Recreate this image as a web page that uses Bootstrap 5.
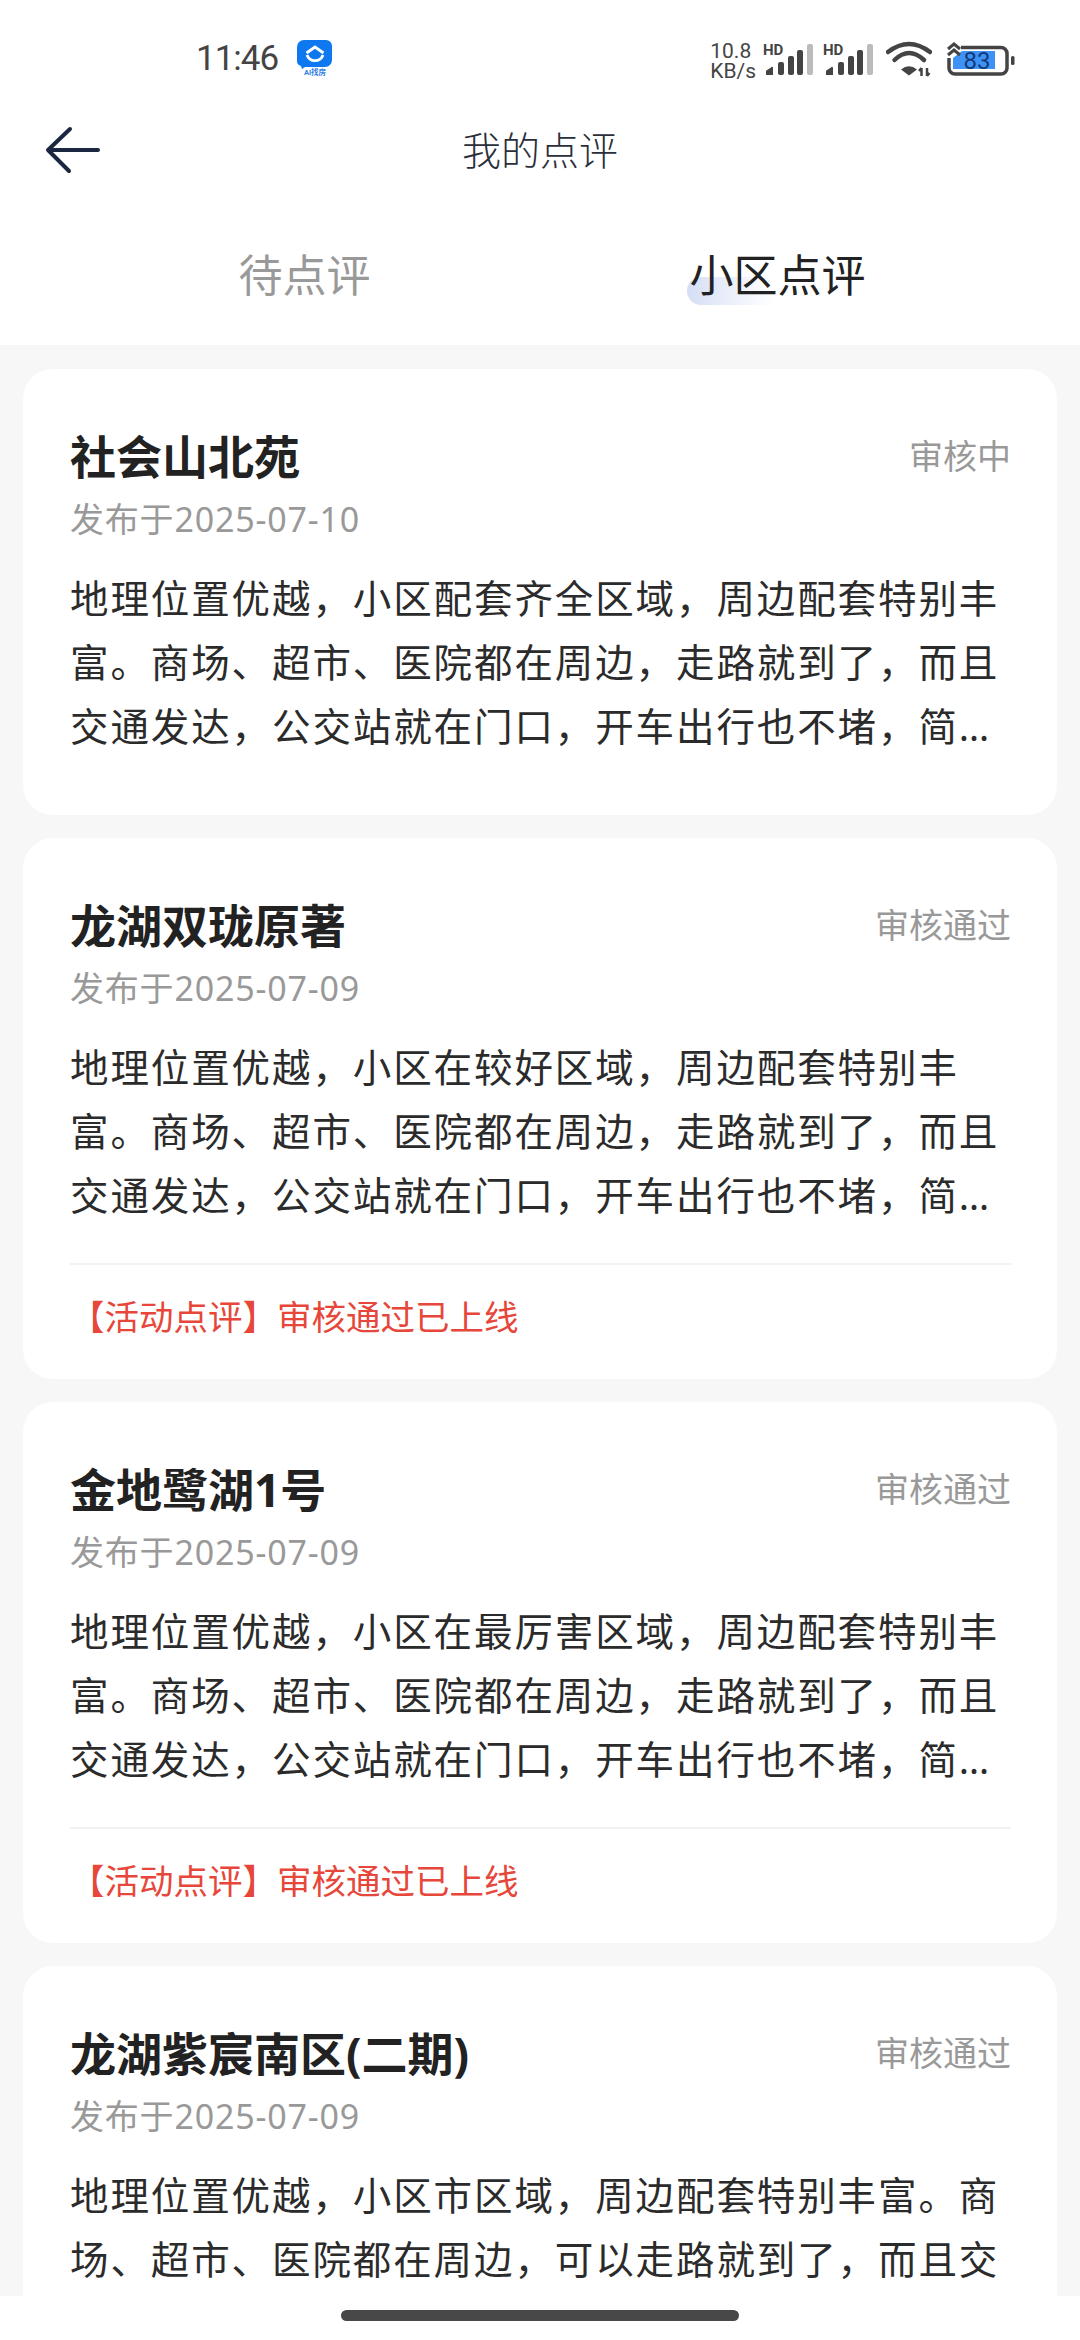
<!DOCTYPE html>
<html lang="zh-CN">

<head>
    <meta charset="UTF-8">
    <meta name="viewport" content="width=device-width, initial-scale=1.0">
    <title>我的点评</title>
    <link rel="stylesheet" href="https://cdn.jsdelivr.net/npm/bootstrap@5.3.0/dist/css/bootstrap.min.css">
    <style>
        body {
            background-color: #f7f7f7;
            color: #222;
            font-family: "Noto Sans", "Noto Sans CJK SC", sans-serif;
        }

        .phone {
            height: 2340px;
            overflow: hidden;
        }

        .status-bar {
            height: 98px;
            padding: 20px 63px 0 196px;
            color: #444;
        }

        .clock {
            font-family: Roboto, sans-serif;
            font-size: 35px;
            letter-spacing: -1px;
            margin-right: 19px;
        }

        .app-mark {
            margin-top: -2px;
        }

        .speed {
            font-family: Roboto, sans-serif;
            font-size: 21px;
            line-height: 20px;
            margin-right: 7px;
            margin-top: 3px;
        }

        .gap-signal {
            margin-right: 10px;
        }

        .gap-wide {
            margin-right: 13px;
        }

        .top-nav {
            height: 104px;
        }

        .top-title {
            font-size: 39px;
            font-weight: 300;
            color: #2a2f3a;
        }

        .back-btn {
            left: 45px;
            top: 28px;
        }

        .tabs-row {
            height: 143px;
            padding: 3px 66px 0 68px;
        }

        .tab-item {
            font-size: 44px;
            line-height: 60px;
            color: #999;
        }

        .tab-item.on {
            color: #222;
            isolation: isolate;
        }

        .tab-item.on::before {
            content: "";
            position: absolute;
            left: -3px;
            bottom: 0;
            width: 86px;
            height: 28px;
            border-radius: 14px 0 0 14px;
            background: linear-gradient(90deg, #d5dff5, #fff);
            z-index: -1;
        }

        .list-wrap {
            padding: 24px 23px 0;
            gap: 23px;
            min-height: 0;
        }

        .review-card {
            border: 0;
            border-radius: 30px;
            flex-shrink: 0;
        }

        .review-card .card-body {
            padding: 57px 46px 57px 47px;
        }

        .review-card .card-body.has-note {
            padding-bottom: 39px;
        }

        .place-name {
            font-size: 46px;
            line-height: 60px;
            font-weight: 700;
            margin: 0;
        }

        .review-state {
            font-size: 34px;
            line-height: 50px;
            color: #999;
        }

        .review-date {
            font-size: 34px;
            line-height: 46px;
            letter-spacing: .8px;
            color: #999;
            margin-top: 10px;
        }

        .review-text {
            font-size: 38.5px;
            line-height: 64px;
            letter-spacing: 1.9px;
            margin: 24px 0 0;
            color: #2b2b2b;
        }

        .review-note {
            border-top: 2px solid #f2f2f2;
            font-size: 34.500px;
            line-height: 46px;
            color: #e6473a;
            padding-top: 29px;
            margin-top: 36px;
        }

        .home-area {
            height: 44px;
            flex-shrink: 0;
            padding-top: 14px;
        }

        .home-bar {
            width: 398px;
            height: 11px;
            border-radius: 6px;
            background-color: #484848;
        }
    </style>
</head>

<body>
    <div class="phone d-flex flex-column">
        <div class="bg-white flex-shrink-0">
            <!-- status bar -->
            <div class="status-bar d-flex align-items-center">
                <span class="clock">11:46</span>
                <svg class="app-mark" width="36" height="36" viewBox="0 0 36 36">
                    <path d="M7 0h22a6 6 0 0 1 6 6v14a7 7 0 0 1-7 7H8l-3 2-1-3a5 5 0 0 1-4-5V7a7 7 0 0 1 7-7z" fill="#0d78ef"/>
                    <path d="M9.500 13l8.500-6 8.500 6" fill="none" stroke="#fff" stroke-width="2.800"/>
                    <path d="M10 15a8.500 8.500 0 0 0 16 0" fill="none" stroke="#fff" stroke-width="2.800"/>
                    <text x="18" y="34.500" text-anchor="middle" font-family="Roboto, 'Noto Sans CJK SC', sans-serif" font-size="7.500" font-weight="700" fill="#2f7fe6">AI找房</text>
                </svg>
                <div class="ms-auto d-flex align-items-center">
                    <div class="speed">10.8<br>KB/s</div>
                    <svg class="gap-signal" width="50" height="42" viewBox="0 -5 50 42">
                        <text x="0" y="11.500" font-family="Roboto, sans-serif" font-size="15" font-weight="700" fill="#444">HD</text>
                        <path d="M3 32v-3.500a2 2 0 0 1 1-1.500l4-2.500a1 1 0 0 1 2 1V32z" fill="#444"/>
                        <rect x="15" y="19" width="6" height="13" rx="2" fill="#444"/>
                        <rect x="25" y="13" width="6" height="19" rx="2" fill="#444"/>
                        <rect x="34" y="7" width="6" height="25" rx="2" fill="#444"/>
                        <rect x="44" y="1" width="6" height="31" rx="2" fill="#bbb"/>
                    </svg>
                    <svg class="gap-wide" width="50" height="42" viewBox="0 -5 50 42">
                        <text x="0" y="11.500" font-family="Roboto, sans-serif" font-size="15" font-weight="700" fill="#444">HD</text>
                        <path d="M3 32v-3.500a2 2 0 0 1 1-1.500l4-2.500a1 1 0 0 1 2 1V32z" fill="#444"/>
                        <rect x="15" y="19" width="6" height="13" rx="2" fill="#444"/>
                        <rect x="25" y="13" width="6" height="19" rx="2" fill="#444"/>
                        <rect x="34" y="7" width="6" height="25" rx="2" fill="#444"/>
                        <rect x="44" y="1" width="6" height="31" rx="2" fill="#bbb"/>
                    </svg>
                    <svg class="gap-wide" width="46" height="36" viewBox="0 0 46 36">
                        <path d="M2 11Q23-5 44 11" fill="none" stroke="#444" stroke-width="4.500" stroke-linecap="round"/>
                        <path d="M8.500 19Q23 5 38 19" fill="none" stroke="#444" stroke-width="4.500" stroke-linecap="round"/>
                        <path d="M15 28.500Q23 22 31 28.500L23 34.500z" fill="#444"/>
                        <path d="M35.500 27v8M33 30l2.500-3M41 27v8M43.500 32l-2.500 3" fill="none" stroke="#444" stroke-width="2.500"/>
                    </svg>
                    <svg width="72" height="38" viewBox="0 0 72 38">
                        <path d="M17 11H50V29H8V18z" fill="#3d93f5"/>
                        <path d="M16 7.500H56a6 6 0 0 1 6 6V28a6 6 0 0 1-6 6H10a6 6 0 0 1-6-6V18" fill="none" stroke="#444" stroke-width="3.500"/>
                        <rect x="66" y="16" width="3.500" height="9" rx="1.500" fill="#444"/>
                        <path d="M3 9l6-5 6 5M3 15l6-5 6 5" fill="none" stroke="#444" stroke-width="3"/>
                        <text x="32" y="28.500" text-anchor="middle" font-family="Roboto, sans-serif" font-size="24" font-weight="400" fill="#123a78">83</text>
                    </svg>
                </div>
            </div>

            <!-- nav -->
            <div class="top-nav position-relative d-flex justify-content-center align-items-center">
                <a href="#" class="back-btn position-absolute lh-1">
                    <svg width="56" height="48" viewBox="0 0 56 48">
                        <path d="M3 24h50M25 3L3 24l21 21" fill="none" stroke="#1b2740" stroke-width="4" stroke-linecap="round" stroke-linejoin="round"/>
                    </svg>
                </a>
                <span class="top-title">我的点评</span>
            </div>

            <!-- tabs -->
            <div class="tabs-row row g-0 align-items-center text-center">
                <div class="col-6"><span class="tab-item">待点评</span></div>
                <div class="col-6"><span class="tab-item on position-relative d-inline-block">小区点评</span></div>
            </div>
        </div>

        <div class="list-wrap d-flex flex-column flex-grow-1 overflow-hidden">
            <div class="card review-card">
                <div class="card-body">
                    <div class="d-flex justify-content-between align-items-center">
                        <h2 class="place-name">社会山北苑</h2>
                        <span class="review-state">审核中</span>
                    </div>
                    <div class="review-date">发布于2025-07-10</div>
                    <p class="review-text">地理位置优越，小区配套齐全区域，周边配套特别丰富。商场、超市、医院都在周边，走路就到了，而且交通发达，公交站就在门口，开车出行也不堵，简…</p>
                </div>
            </div>

            <div class="card review-card">
                <div class="card-body has-note">
                    <div class="d-flex justify-content-between align-items-center">
                        <h2 class="place-name">龙湖双珑原著</h2>
                        <span class="review-state">审核通过</span>
                    </div>
                    <div class="review-date">发布于2025-07-09</div>
                    <p class="review-text">地理位置优越，小区在较好区域，周边配套特别丰富。商场、超市、医院都在周边，走路就到了，而且交通发达，公交站就在门口，开车出行也不堵，简…</p>
                    <div class="review-note">【活动点评】审核通过已上线</div>
                </div>
            </div>

            <div class="card review-card">
                <div class="card-body has-note">
                    <div class="d-flex justify-content-between align-items-center">
                        <h2 class="place-name">金地鹭湖1号</h2>
                        <span class="review-state">审核通过</span>
                    </div>
                    <div class="review-date">发布于2025-07-09</div>
                    <p class="review-text">地理位置优越，小区在最厉害区域，周边配套特别丰富。商场、超市、医院都在周边，走路就到了，而且交通发达，公交站就在门口，开车出行也不堵，简…</p>
                    <div class="review-note">【活动点评】审核通过已上线</div>
                </div>
            </div>

            <div class="card review-card">
                <div class="card-body">
                    <div class="d-flex justify-content-between align-items-center">
                        <h2 class="place-name">龙湖紫宸南区(二期)</h2>
                        <span class="review-state">审核通过</span>
                    </div>
                    <div class="review-date">发布于2025-07-09</div>
                    <p class="review-text">地理位置优越，小区市区域，周边配套特别丰富。商场、超市、医院都在周边，可以走路就到了，而且交</p>
                </div>
            </div>
        </div>

        <div class="home-area bg-white d-flex justify-content-center align-items-start">
            <div class="home-bar"></div>
        </div>
    </div>

    <script src="https://cdn.jsdelivr.net/npm/bootstrap@5.3.0/dist/js/bootstrap.bundle.min.js"></script>
</body>

</html>
